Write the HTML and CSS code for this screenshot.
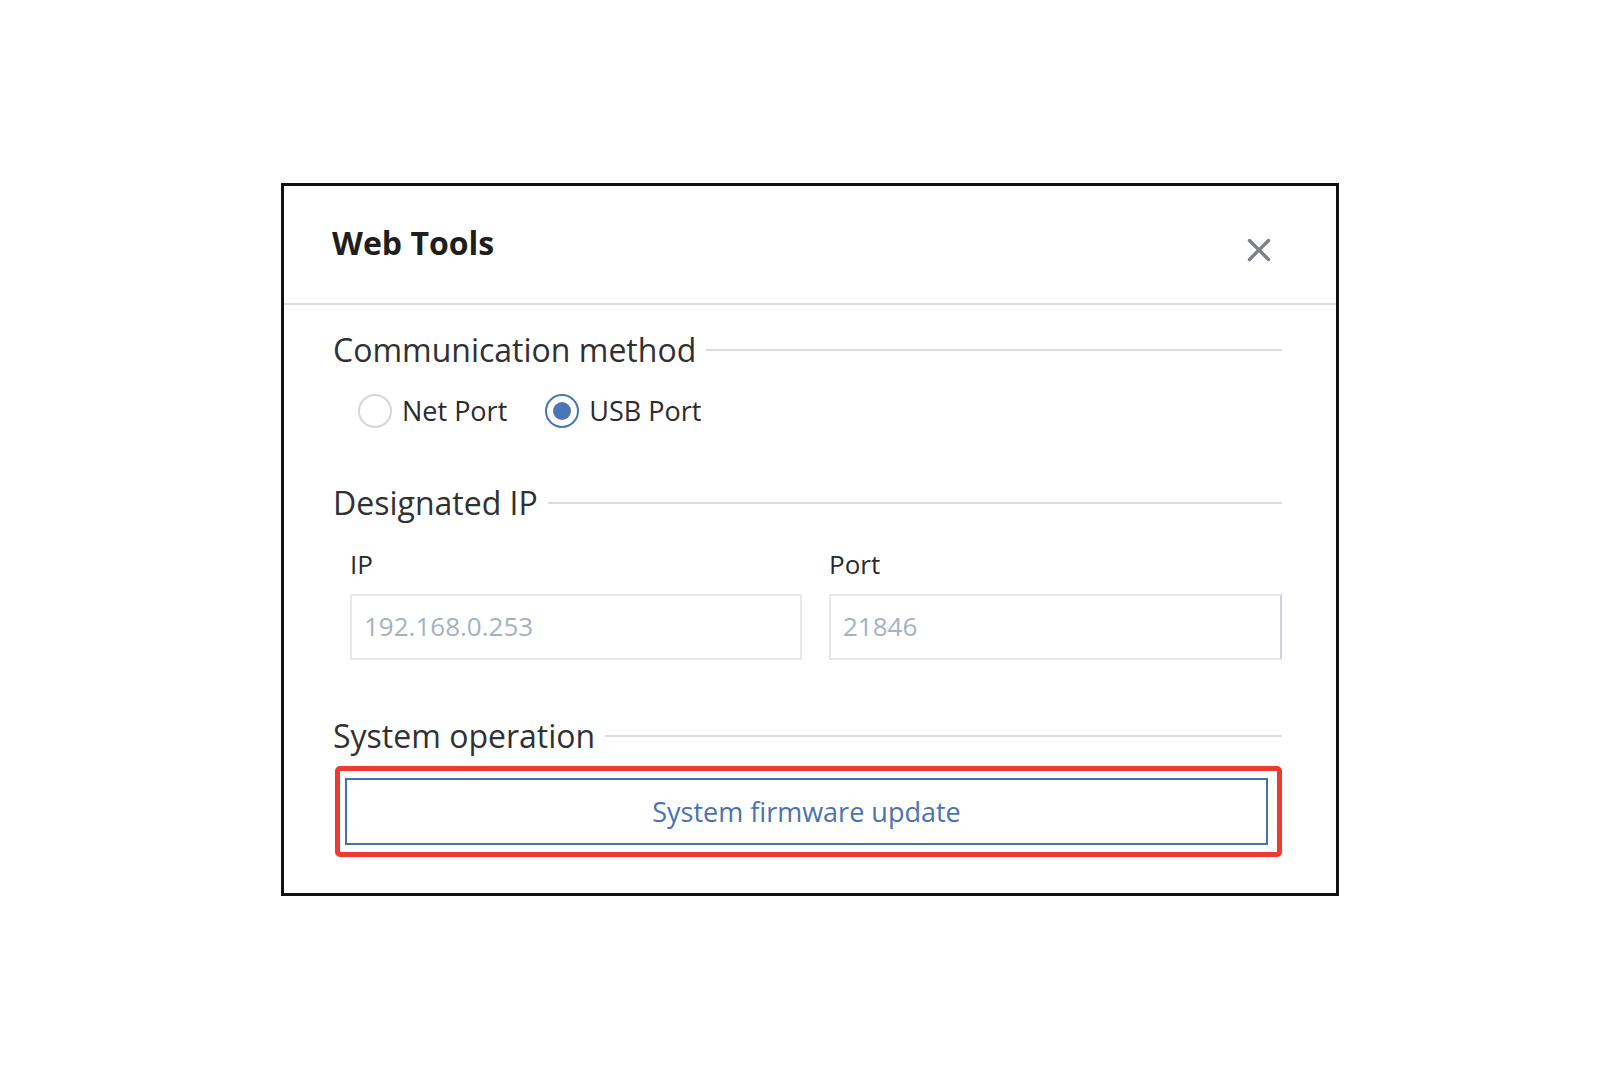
FILE: index.html
```html
<!DOCTYPE html>
<html lang="en">
<head>
<meta charset="utf-8">
<title>Web Tools</title>
<link rel="stylesheet" href="styles.css">
</head>
<body>
<div class="page">
  <div class="dialog">
    <div class="dialog-header">
      <div class="dialog-title">Web Tools</div>
      <button class="close-btn" aria-label="Close">
        <svg width="24" height="24" viewBox="0 0 24 24"><path d="M2.5 2.5 L21.5 21.5 M21.5 2.5 L2.5 21.5" stroke="#7b8089" stroke-width="3.4" stroke-linecap="round" fill="none"/></svg>
      </button>
    </div>
    <div class="dialog-body">
      <div class="section-title"><span>Communication method</span><i class="rule"></i></div>
      <div class="radio-row">
        <label class="radio"><span class="radio-dot"></span><span class="radio-text">Net Port</span></label>
        <label class="radio checked"><span class="radio-dot"></span><span class="radio-text">USB Port</span></label>
      </div>

      <div class="section-title gap-top"><span>Designated IP</span><i class="rule"></i></div>
      <div class="field-grid">
        <div class="field">
          <div class="field-label">IP</div>
          <div class="field-input">192.168.0.253</div>
        </div>
        <div class="field">
          <div class="field-label">Port</div>
          <div class="field-input port">21846</div>
        </div>
      </div>

      <div class="section-title gap-top2"><span>System operation</span><i class="rule"></i></div>
      <div class="highlight">
        <button class="op-btn">System firmware update</button>
      </div>
    </div>
  </div>
</div>
</body>
</html>
```
FILE: styles.css
```css
html, body {
  margin: 0;
  padding: 0;
  background: #ffffff;
}
body {
  font-family: "Open Sans", "Noto Sans", "Liberation Sans", sans-serif;
  color: #2a2b2e;
}
.page {
  padding: 183px 0 0 281px;
}
.dialog {
  box-sizing: border-box;
  width: 1058px;
  height: 713px;
  border: 3px solid #111111;
  background: #ffffff;
  display: flex;
  flex-direction: column;
}
.dialog-header {
  box-sizing: border-box;
  height: 119px;
  padding: 37px 65px 0 48px;
  border-bottom: 2px solid #dcdcdc;
  display: flex;
  justify-content: space-between;
  align-items: flex-start;
}
.dialog-title {
  font-size: 32px;
  line-height: 40px;
  font-weight: 700;
  color: #1e1e1e;
}
.close-btn {
  margin-top: 15px;
  padding: 0;
  border: 0;
  background: transparent;
  width: 24px;
  height: 24px;
  display: block;
}
.close-btn svg {
  display: block;
}
.dialog-body {
  padding: 25px 54px 0 49px;
}
.section-title {
  display: flex;
  align-items: center;
  font-size: 32px;
  line-height: 40px;
  color: #303133;
}
.section-title .rule {
  flex: 1;
  height: 2px;
  background: #dcdcdc;
  margin-left: 10px;
}
.gap-top {
  margin-top: 52px;
}
.gap-top2 {
  margin-top: 56px;
}
.radio-row {
  display: flex;
  align-items: center;
  gap: 38px;
  height: 40px;
  margin-top: 21px;
  padding-left: 25px;
}
.radio {
  display: flex;
  align-items: center;
  gap: 10px;
}
.radio-dot {
  box-sizing: border-box;
  width: 34px;
  height: 34px;
  border-radius: 50%;
  border: 2px solid #d6d6d6;
  display: flex;
  align-items: center;
  justify-content: center;
}
.radio.checked .radio-dot {
  border-color: #4a76b6;
}
.radio.checked .radio-dot::after {
  content: "";
  width: 18px;
  height: 18px;
  border-radius: 50%;
  background: #4a76b6;
}
.radio-text {
  font-size: 27px;
  line-height: 36px;
  color: #2b2b2d;
}
.field-grid {
  display: grid;
  grid-template-columns: 452px 1fr;
  column-gap: 27px;
  margin-top: 23px;
  padding-left: 17px;
}
.field-label {
  font-size: 26px;
  line-height: 36px;
  color: #2b2b2d;
}
.field-input {
  box-sizing: border-box;
  margin-top: 12px;
  height: 66px;
  border: 2px solid #e6e8ed;
  padding-left: 12px;
  padding-bottom: 3px;
  display: flex;
  align-items: center;
  font-size: 26px;
  color: #a6b1c2;
}
.field-input.port {
  border-right-color: #cfd3da;
}
.highlight {
  box-sizing: border-box;
  margin: 10px 0 0 2px;
  width: 947px;
  height: 91px;
  border: 5px solid #ee3a33;
  border-radius: 5px;
  padding: 7px 9px 7px 5px;
}
.op-btn {
  box-sizing: border-box;
  width: 100%;
  height: 67px;
  border: 2px solid #4671b3;
  background: #ffffff;
  font-family: "Open Sans", "Noto Sans", "Liberation Sans", sans-serif;
  font-size: 27px;
  color: #4a72b5;
  padding: 0;
}
```
